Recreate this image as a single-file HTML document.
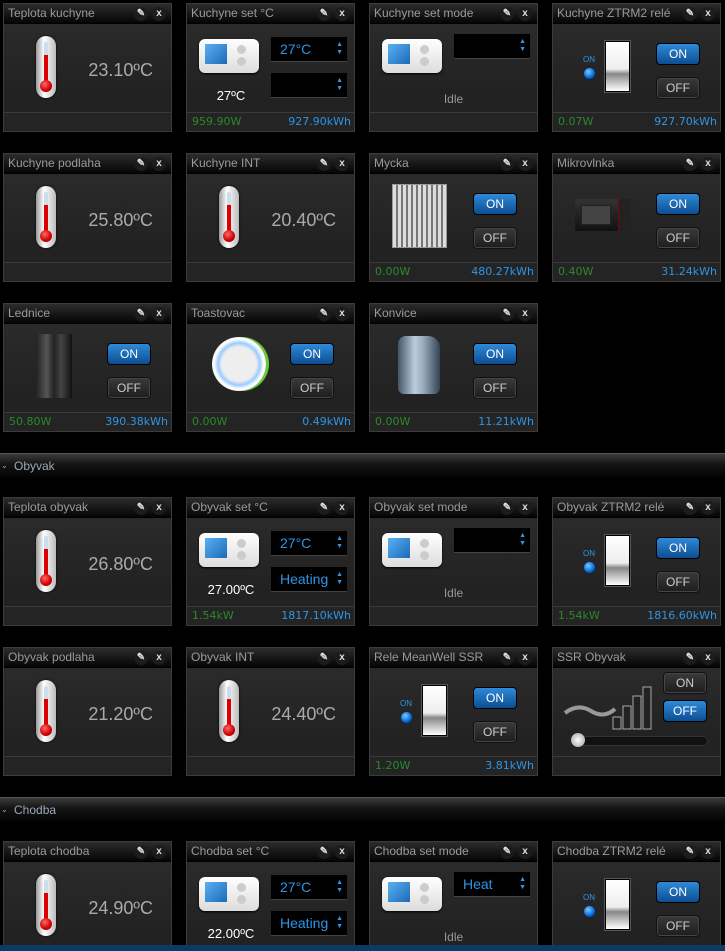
<!DOCTYPE html>
<html><head><meta charset="utf-8"><style>
*{margin:0;padding:0;box-sizing:border-box}
html,body{width:725px;height:951px;overflow:hidden}
body{background:#000;position:relative;font-family:"Liberation Sans",sans-serif}
.w{position:absolute;width:169px;height:129px;border:1px solid #3c3c3c;background:linear-gradient(#2d2d2d,#222 70%);}
.h{position:absolute;left:0;top:0;right:0;height:20px;background:linear-gradient(#2c2c2c,#050505);border-bottom:1px solid #000;color:#9a9a9a;font-size:12px;line-height:19px;padding-left:4px;white-space:nowrap}
.ic{position:absolute;top:3px;width:14px;height:14px;border-radius:7px;background:#1c1c1c;color:#ddd;font-size:10px;line-height:14px;text-align:center;font-weight:bold}
.i1{right:23px}.i2{right:5px}
.f{position:absolute;left:0;right:0;bottom:0;height:19px;border-top:1px solid #3a3a3a;background:#242424;font-family:"DejaVu Sans",sans-serif;font-size:11px;line-height:18px}
.g{position:absolute;left:5px;color:#2a8a2a}.b{position:absolute;right:3px;color:#2e95e6}
.th{position:absolute;left:32px;top:32px;width:20px;height:62px;border-radius:10px;background:linear-gradient(90deg,#999,#fff 40%,#bbb);box-shadow:0 0 2px #000}
.th:before{content:"";position:absolute;left:8px;top:6px;width:4px;height:44px;background:linear-gradient(#cde 0,#cde 30%,#d00 30%);border-radius:2px}
.th:after{content:"";position:absolute;left:4px;top:44px;width:12px;height:12px;border-radius:6px;background:radial-gradient(circle at 40% 35%,#f66,#c00 60%,#800)}
.t{position:absolute;right:18px;top:56px;font-size:18px;color:#aaa}
.ts{position:absolute;left:12px;top:35px;width:60px;height:34px;border-radius:6px;background:linear-gradient(#fff,#ddd);box-shadow:0 1px 2px #000}
.ts:before{content:"";position:absolute;left:6px;top:5px;width:22px;height:20px;background:linear-gradient(135deg,#5ab0f0,#1b6ab8)}
.ts:after{content:"";position:absolute;left:38px;top:6px;width:9px;height:9px;border-radius:5px;background:#ccc;box-shadow:0 12px 0 #ccc}
.sel{position:absolute;left:84px;width:76px;height:25px;background:#000;border-bottom:1px solid #444;color:#2e95e6;font-size:14px;line-height:24px;padding-left:9px}
.sel:after{content:"▲";position:absolute;right:4px;top:4px;font-size:7px;line-height:7px;color:#2e95e6}
.sel:before{content:"▼";position:absolute;right:4px;top:12px;font-size:7px;line-height:7px;color:#2e95e6}
.sv{position:absolute;left:10px;width:68px;top:84px;text-align:center;color:#fff;font-size:13px}
.idle{position:absolute;left:0;right:0;top:88px;text-align:center;color:#999;font-size:12px}
.on,.off{position:absolute;left:103px;width:44px;height:22px;border-radius:4px;font-size:12px;line-height:20px;text-align:center;color:#fff;border:1px solid #000}
.on{top:39px;background:linear-gradient(#2f8ad8,#0c4d92)}
.off{top:73px;background:linear-gradient(#3a3a3a,#1d1d1d);color:#ccc;border-color:#111;box-shadow:inset 0 0 0 1px #444}
.sw{position:absolute;left:52px;top:37px;width:25px;height:51px;border:1px solid #000;background:linear-gradient(#fff,#eee 55%,#888 65%,#fff);box-shadow:0 0 0 1px #555}
.lo{position:absolute;left:30px;top:51px;color:#2e95e6;font-size:8px}
.led{position:absolute;left:31px;top:64px;width:11px;height:11px;border-radius:6px;background:radial-gradient(circle at 40% 35%,#7cf,#06d 60%,#024)}
.sec{position:absolute;left:0;width:725px;height:26px;background:linear-gradient(#3a3a3a,#151515 40%,#000);border-top:1px solid #555;color:#9ab;font-size:12px;line-height:24px;padding-left:14px}
.sec span{position:absolute;left:1px;top:0;font-size:8px;color:#aaa}
</style></head><body>

<div class="w" style="left:3px;top:3px"><div class="h">Teplota kuchyne<div class="ic i1">✎</div><div class="ic i2">x</div></div><div class="th"></div><div class="t">23.10ºC</div><div class="f"></div></div>
<div class="w" style="left:186px;top:3px"><div class="h">Kuchyne set °C<div class="ic i1">✎</div><div class="ic i2">x</div></div><div class="ts"></div><div class="sel" style="top:33px">27°C</div><div class="sel" style="top:69px"></div><div class="sv">27ºC</div><div class="f"><span class="g">959.90W</span><span class="b">927.90kWh</span></div></div>
<div class="w" style="left:369px;top:3px"><div class="h">Kuchyne set mode<div class="ic i1">✎</div><div class="ic i2">x</div></div><div class="ts"></div><div class="sel" style="top:30px"></div><div class="idle">Idle</div><div class="f"></div></div>
<div class="w" style="left:552px;top:3px"><div class="h">Kuchyne ZTRM2 relé<div class="ic i1">✎</div><div class="ic i2">x</div></div><div class="lo">ON</div><div class="led"></div><div class="sw"></div><div class="on">ON</div><div class="off">OFF</div><div class="f"><span class="g">0.07W</span><span class="b">927.70kWh</span></div></div>

<div class="w" style="left:3px;top:153px"><div class="h">Kuchyne podlaha<div class="ic i1">✎</div><div class="ic i2">x</div></div><div class="th"></div><div class="t">25.80ºC</div><div class="f"></div></div>
<div class="w" style="left:186px;top:153px"><div class="h">Kuchyne INT<div class="ic i1">✎</div><div class="ic i2">x</div></div><div class="th"></div><div class="t">20.40ºC</div><div class="f"></div></div>
<div class="w" style="left:369px;top:153px"><div class="h">Mycka<div class="ic i1">✎</div><div class="ic i2">x</div></div><div style="position:absolute;left:22px;top:30px;width:55px;height:64px;background:repeating-linear-gradient(90deg,#ddd 0 3px,#777 3px 5px);border:1px solid #999"></div><div class="on">ON</div><div class="off">OFF</div><div class="f"><span class="g">0.00W</span><span class="b">480.27kWh</span></div></div>
<div class="w" style="left:552px;top:153px"><div class="h">Mikrovlnka<div class="ic i1">✎</div><div class="ic i2">x</div></div><div style="position:absolute;left:22px;top:45px;width:56px;height:32px;background:linear-gradient(#333,#111);border-radius:2px;box-shadow:inset -12px 0 0 #222,inset -13px 0 0 #800"><div style="position:absolute;left:6px;top:6px;width:30px;height:20px;background:#444;border:1px solid #222"></div></div><div class="on">ON</div><div class="off">OFF</div><div class="f"><span class="g">0.40W</span><span class="b">31.24kWh</span></div></div>

<div class="w" style="left:3px;top:303px"><div class="h">Lednice<div class="ic i1">✎</div><div class="ic i2">x</div></div><div style="position:absolute;left:32px;top:30px;width:36px;height:64px;background:linear-gradient(90deg,#222,#555 30%,#222 50%,#444 70%,#111)"></div><div class="on">ON</div><div class="off">OFF</div><div class="f"><span class="g">50.80W</span><span class="b">390.38kWh</span></div></div>
<div class="w" style="left:186px;top:303px"><div class="h">Toastovac<div class="ic i1">✎</div><div class="ic i2">x</div></div><div style="position:absolute;left:25px;top:33px;width:54px;height:54px;border-radius:27px;background:radial-gradient(circle,#eee 45%,#9cf 55%,#fff 65%,#bbb);box-shadow:3px 0 0 #6c3"></div><div class="on">ON</div><div class="off">OFF</div><div class="f"><span class="g">0.00W</span><span class="b">0.49kWh</span></div></div>
<div class="w" style="left:369px;top:303px"><div class="h">Konvice<div class="ic i1">✎</div><div class="ic i2">x</div></div><div style="position:absolute;left:28px;top:32px;width:42px;height:58px;border-radius:8px 12px 6px 6px;background:linear-gradient(90deg,#456,#bcd 40%,#9ab 60%,#345)"></div><div class="on">ON</div><div class="off">OFF</div><div class="f"><span class="g">0.00W</span><span class="b">11.21kWh</span></div></div>

<div class="sec" style="top:453px"><span>⌄</span>Obyvak</div>

<div class="w" style="left:3px;top:497px"><div class="h">Teplota obyvak<div class="ic i1">✎</div><div class="ic i2">x</div></div><div class="th"></div><div class="t">26.80ºC</div><div class="f"></div></div>
<div class="w" style="left:186px;top:497px"><div class="h">Obyvak set °C<div class="ic i1">✎</div><div class="ic i2">x</div></div><div class="ts"></div><div class="sel" style="top:33px">27°C</div><div class="sel" style="top:69px">Heating</div><div class="sv">27.00ºC</div><div class="f"><span class="g">1.54kW</span><span class="b">1817.10kWh</span></div></div>
<div class="w" style="left:369px;top:497px"><div class="h">Obyvak set mode<div class="ic i1">✎</div><div class="ic i2">x</div></div><div class="ts"></div><div class="sel" style="top:30px"></div><div class="idle">Idle</div><div class="f"></div></div>
<div class="w" style="left:552px;top:497px"><div class="h">Obyvak ZTRM2 relé<div class="ic i1">✎</div><div class="ic i2">x</div></div><div class="lo">ON</div><div class="led"></div><div class="sw"></div><div class="on">ON</div><div class="off">OFF</div><div class="f"><span class="g">1.54kW</span><span class="b">1816.60kWh</span></div></div>

<div class="w" style="left:3px;top:647px"><div class="h">Obyvak podlaha<div class="ic i1">✎</div><div class="ic i2">x</div></div><div class="th"></div><div class="t">21.20ºC</div><div class="f"></div></div>
<div class="w" style="left:186px;top:647px"><div class="h">Obyvak INT<div class="ic i1">✎</div><div class="ic i2">x</div></div><div class="th"></div><div class="t">24.40ºC</div><div class="f"></div></div>
<div class="w" style="left:369px;top:647px"><div class="h">Rele MeanWell SSR<div class="ic i1">✎</div><div class="ic i2">x</div></div><div class="lo">ON</div><div class="led"></div><div class="sw"></div><div class="on">ON</div><div class="off">OFF</div><div class="f"><span class="g">1.20W</span><span class="b">3.81kWh</span></div></div>
<div class="w" style="left:552px;top:647px"><div class="h">SSR Obyvak<div class="ic i1">✎</div><div class="ic i2">x</div></div>
<svg style="position:absolute;left:10px;top:35px" width="95" height="50"><path d="M2 30 Q15 20 28 28 T52 26" stroke="#999" stroke-width="4" fill="none"/><rect x="50" y="34" width="8" height="12" fill="#222" stroke="#aaa"/><rect x="60" y="23" width="8" height="23" fill="#222" stroke="#aaa"/><rect x="70" y="13" width="8" height="33" fill="#222" stroke="#aaa"/><rect x="80" y="4" width="8" height="42" fill="#222" stroke="#aaa"/></svg>
<div class="off" style="top:24px;left:110px">ON</div><div class="on" style="top:52px;left:110px">OFF</div>
<div style="position:absolute;left:20px;top:88px;width:135px;height:10px;border-radius:5px;background:#111;border:1px solid #333"></div><div style="position:absolute;left:18px;top:85px;width:14px;height:14px;border-radius:7px;background:radial-gradient(#fff,#999)"></div>
<div class="f"></div></div>

<div class="sec" style="top:797px"><span>⌄</span>Chodba</div>

<div class="w" style="left:3px;top:841px"><div class="h">Teplota chodba<div class="ic i1">✎</div><div class="ic i2">x</div></div><div class="th"></div><div class="t">24.90ºC</div></div>
<div class="w" style="left:186px;top:841px"><div class="h">Chodba set °C<div class="ic i1">✎</div><div class="ic i2">x</div></div><div class="ts"></div><div class="sel" style="top:33px">27°C</div><div class="sel" style="top:69px">Heating</div><div class="sv">22.00ºC</div></div>
<div class="w" style="left:369px;top:841px"><div class="h">Chodba set mode<div class="ic i1">✎</div><div class="ic i2">x</div></div><div class="ts"></div><div class="sel" style="top:30px">Heat</div><div class="idle">Idle</div></div>
<div class="w" style="left:552px;top:841px"><div class="h">Chodba ZTRM2 relé<div class="ic i1">✎</div><div class="ic i2">x</div></div><div class="lo">ON</div><div class="led"></div><div class="sw"></div><div class="on">ON</div><div class="off">OFF</div></div>

<div style="position:absolute;left:0;top:945px;width:725px;height:6px;background:#0b3a66"></div>
</body></html>
